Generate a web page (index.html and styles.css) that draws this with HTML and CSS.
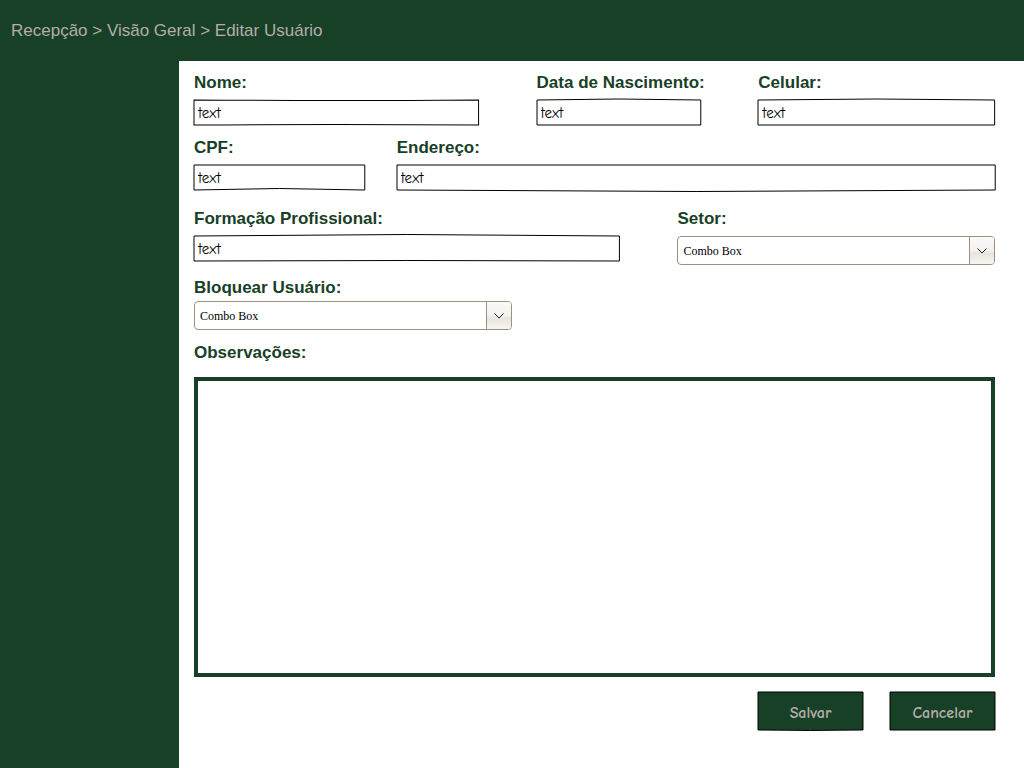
FILE: index.html
```html
<!DOCTYPE html>
<html lang="pt-BR">
<head>
<meta charset="utf-8">
<meta name="viewport" content="width=device-width, initial-scale=1">
<title>Editar Usuário</title>
<link rel="stylesheet" href="styles.css">
</head>
<body>
<header class="topbar">
  <nav class="breadcrumb" aria-label="Navegação">Recepção &gt; Visão Geral &gt; Editar Usuário</nav>
</header>
<div class="layout">
  <aside class="sidebar"></aside>
  <main class="content">
    <form class="form">
      <div class="row row-identity">
        <div class="field">
          <label for="nome">Nome:</label>
          <div class="sketch">
            <input id="nome" type="text" value="text">
            <svg class="outline" viewBox="0 0 100 25" preserveAspectRatio="none" aria-hidden="true"><path d="M0 0Q50 1 100 0V25Q50 24 0 25Z"/></svg>
          </div>
        </div>
        <div class="field">
          <label for="nascimento">Data de Nascimento:</label>
          <div class="sketch">
            <input id="nascimento" type="text" value="text">
            <svg class="outline" viewBox="0 0 100 25" preserveAspectRatio="none" aria-hidden="true"><path d="M0 0Q50 -2 100 0V25H0Z"/></svg>
          </div>
        </div>
        <div class="field">
          <label for="celular">Celular:</label>
          <div class="sketch">
            <input id="celular" type="text" value="text">
            <svg class="outline" viewBox="0 0 100 25" preserveAspectRatio="none" aria-hidden="true"><path d="M0 0Q50 -2 100 0V25H0Z"/></svg>
          </div>
        </div>
      </div>
      <div class="row row-address">
        <div class="field">
          <label for="cpf">CPF:</label>
          <div class="sketch">
            <input id="cpf" type="text" value="text">
            <svg class="outline" viewBox="0 0 100 25" preserveAspectRatio="none" aria-hidden="true"><path d="M0 0H100V25Q50 22 0 25Z"/></svg>
          </div>
        </div>
        <div class="field">
          <label for="endereco">Endereço:</label>
          <div class="sketch">
            <input id="endereco" type="text" value="text">
            <svg class="outline" viewBox="0 0 100 25" preserveAspectRatio="none" aria-hidden="true"><path d="M0 0H100V25Q50 28 0 25Z"/></svg>
          </div>
        </div>
      </div>
      <div class="row row-job">
        <div class="field">
          <label for="formacao">Formação Profissional:</label>
          <div class="sketch">
            <input id="formacao" type="text" value="text">
            <svg class="outline" viewBox="0 0 100 25" preserveAspectRatio="none" aria-hidden="true"><path d="M0 0Q50 -3 100 0V25Q50 24 0 25Z"/></svg>
          </div>
        </div>
        <div class="field">
          <label for="setor">Setor:</label>
          <div class="combo">
            <select id="setor"><option>Combo Box</option></select>
            <span class="combo-arrow"><svg width="10" height="6" viewBox="0 0 10 6" aria-hidden="true"><path d="M.5.5L5 5L9.500.5"/></svg></span>
          </div>
        </div>
      </div>
      <div class="row row-block">
        <div class="field field-tight">
          <label for="bloquear">Bloquear Usuário:</label>
          <div class="combo">
            <select id="bloquear"><option>Combo Box</option></select>
            <span class="combo-arrow"><svg width="10" height="6" viewBox="0 0 10 6" aria-hidden="true"><path d="M.5.5L5 5L9.500.5"/></svg></span>
          </div>
        </div>
      </div>
      <div class="field field-notes">
        <label for="observacoes">Observações:</label>
        <textarea id="observacoes"></textarea>
      </div>
      <div class="actions">
        <button type="submit" class="button">Salvar
          <svg class="outline" viewBox="0 0 100 38" preserveAspectRatio="none" aria-hidden="true"><path d="M0 0H100V38Q50 39 0 38Z"/></svg>
        </button>
        <button type="button" class="button">Cancelar
          <svg class="outline" viewBox="0 0 100 38" preserveAspectRatio="none" aria-hidden="true"><path d="M0 0H100V38H0Z"/></svg>
        </button>
      </div>
    </form>
  </main>
</div>
</body>
</html>
```
FILE: styles.css
```css
* {
  box-sizing: border-box;
}

body {
  display: flex;
  flex-direction: column;
  min-height: 100vh;
  margin: 0;
  background: #fff;
  color: #184027;
  font: 17px/20px "Liberation Sans", Arial, sans-serif;
}

.topbar {
  padding: 21px 11px 20px;
  background: #184027;
  color: #b3aea8;
}

.layout {
  display: flex;
  flex: 1;
}

.sidebar {
  flex: 0 0 179px;
  background: #184027;
}

.content {
  flex: 1;
  min-width: 0;
  padding: 12px 29px 24px 15px;
}

.row {
  display: grid;
  margin-bottom: 13px;
}

.row-identity {
  grid-template-columns: 285fr 164fr 237fr;
  column-gap: 58px;
}

.row-address {
  grid-template-columns: 171fr 599fr;
  column-gap: 32px;
  margin-bottom: 19px;
}

.row-job {
  grid-template-columns: 426fr 318fr;
  column-gap: 58px;
}

.row-block {
  grid-template-columns: 318fr 426fr;
  column-gap: 58px;
}

.field {
  display: flex;
  flex-direction: column;
  gap: 7px;
  min-width: 0;
}

.field-tight {
  gap: 3px;
}

.field-notes {
  gap: 14px;
}

label {
  font-weight: bold;
  white-space: nowrap;
}

.sketch,
.combo,
.button {
  position: relative;
}

.outline {
  position: absolute;
  inset: 0;
  width: 100%;
  height: 100%;
  overflow: visible;
  pointer-events: none;
}

.outline path {
  fill: none;
  stroke: #000;
  stroke-width: 1px;
  vector-effect: non-scaling-stroke;
}

input {
  display: block;
  width: 100%;
  height: 25px;
  padding: 0 4px;
  border: 0;
  background: transparent;
  color: #000;
  font: 15px "Comic Sans MS", "Comic Neue", "Comic Relief", cursive;
}

select {
  display: block;
  width: 100%;
  height: 29px;
  padding: 0 30px 0 5px;
  border: 1px solid #9c917f;
  border-radius: 4px;
  appearance: none;
  background: #fff;
  color: #000;
  font: 12px "Liberation Serif", "Times New Roman", serif;
}

.combo-arrow {
  position: absolute;
  inset: 1px 1px 1px auto;
  display: flex;
  align-items: center;
  justify-content: center;
  width: 25px;
  border-left: 1px solid #9c917f;
  border-radius: 0 3px 3px 0;
  background: linear-gradient(#fbfaf9, #f3f1ee 50%, #e8e4dc 60%, #f6f5f2);
  pointer-events: none;
}

.combo-arrow path {
  fill: none;
  stroke: #222;
}

textarea {
  display: block;
  width: 100%;
  height: 300px;
  padding: 8px;
  border: 4px solid #184027;
  background: #fff;
  font: inherit;
  resize: vertical;
}

textarea::-webkit-resizer {
  display: none;
}

.actions {
  display: flex;
  justify-content: flex-end;
  gap: 27px;
  margin-top: 15px;
}

.button {
  width: 105px;
  height: 38px;
  padding: 4px 0 0;
  border: 0;
  background: #184027;
  color: #b3aea8;
  font: bold 16px "Comic Sans MS", "Comic Neue", "Comic Relief", cursive;
}
```
